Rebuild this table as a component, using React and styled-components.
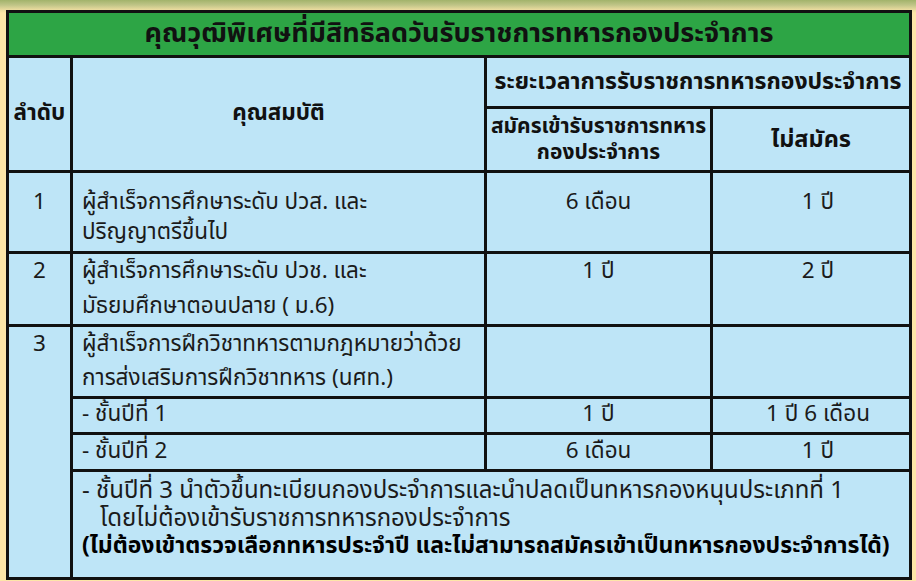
import React from 'react';
import styled, { createGlobalStyle } from 'styled-components';

const GlobalStyle = createGlobalStyle`
    html, body {
        margin: 0;
        padding: 0;
    }
    body {
        width: 916px;
        height: 581px;
        overflow: hidden;
        background: linear-gradient(to bottom, #a2b36b 0px, #bfc487 5px, #ecdc9f 10px, #fde6a8 13px);
        font-family: "Noto Sans Thai", "Noto Sans", "DejaVu Sans", sans-serif;
    }
`;

const Wrapper = styled.div`
    padding: 10px 0 0 6px;
`;

const Table = styled.table`
    width: 903px;
    border-collapse: collapse;
    table-layout: fixed;
    border: 3px solid #111;
    color: #1b1b1b;
`;

const Row = styled.tr`
    height: ${props => props.$h}px;
`;

const TitleCell = styled.th`
    background-color: #2da545;
    border: 3px solid #111;
    font-size: 27px;
    font-weight: bold;
    color: #111;
    text-align: center;
    vertical-align: middle;
    line-height: 36px;
    padding: 0;
`;

const HeadCell = styled.th`
    background-color: #bee5f7;
    border: 3px solid #111;
    font-size: ${props => props.$size || 22.5}px;
    font-weight: bold;
    color: #111;
    text-align: center;
    vertical-align: middle;
    line-height: 26px;
    white-space: nowrap;
    padding: 0 0 ${props => props.$pb || 0}px 0;
`;

const Cell = styled.td`
    background-color: #bee5f7;
    border: 3px solid #111;
    font-size: ${props => props.$size || 22.5}px;
    line-height: ${props => props.$lh || 30}px;
    white-space: nowrap;
    text-align: ${props => props.$align || 'left'};
    vertical-align: ${props => props.$valign || 'top'};
    padding: ${props => props.$pt || 0}px 0 ${props => props.$pb || 0}px ${props => props.$pl || 0}px;
`;

const Indent = styled.span`
    padding-left: 18px;
`;

const Strong = styled.span`
    font-size: 23px;
    font-weight: bold;
    color: #000;
`;

const rows = [
    { no: '1', text: ['ผู้สำเร็จการศึกษาระดับ ปวส. และ', 'ปริญญาตรีขึ้นไป'], apply: '6 เดือน', none: '1 ปี', h: 81, lh: 30, pt: 14 },
    { no: '2', text: ['ผู้สำเร็จการศึกษาระดับ ปวช. และ', 'มัธยมศึกษาตอนปลาย ( ม.6)'], apply: '1 ปี', none: '2 ปี', h: 71, lh: 35, pt: 0 },
];

const App = () => {
    return (
        <Wrapper>
            <GlobalStyle />
            <Table>
                <colgroup>
                    <col style={{ width: 64 }} />
                    <col style={{ width: 414 }} />
                    <col style={{ width: 226 }} />
                    <col style={{ width: 199 }} />
                </colgroup>
                <tbody>
                    <Row $h={45}>
                        <TitleCell colSpan={4}>คุณวุฒิพิเศษที่มีสิทธิลดวันรับราชการทหารกองประจำการ</TitleCell>
                    </Row>
                    <Row $h={51}>
                        <HeadCell rowSpan={2} $pb={2}>ลำดับ</HeadCell>
                        <HeadCell rowSpan={2} $pb={2}>คุณสมบัติ</HeadCell>
                        <HeadCell colSpan={2} $size={23}>ระยะเวลาการรับราชการทหารกองประจำการ</HeadCell>
                    </Row>
                    <Row $h={64}>
                        <HeadCell $size={21}>สมัครเข้ารับราชการทหาร<br />กองประจำการ</HeadCell>
                        <HeadCell $size={23.5}>ไม่สมัคร</HeadCell>
                    </Row>
                    {rows.map(({ no, text, apply, none, h, lh, pt }) => (
                        <Row $h={h} key={`row${no}`}>
                            <Cell $align='center' $lh={lh} $pt={pt}>{no}</Cell>
                            <Cell $lh={lh} $pt={pt} $pl={9}>{text[0]}<br />{text[1]}</Cell>
                            <Cell $align='center' $lh={lh} $pt={pt}>{apply}</Cell>
                            <Cell $align='center' $lh={lh} $pt={pt} $pl={14}>{none}</Cell>
                        </Row>
                    ))}
                    <Row $h={72}>
                        <Cell rowSpan={4} $align='center' $lh={34}>3</Cell>
                        <Cell $lh={34} $pl={9}>ผู้สำเร็จการฝึกวิชาทหารตามกฎหมายว่าด้วย<br />การส่งเสริมการฝึกวิชาทหาร (นศท.)</Cell>
                        <Cell />
                        <Cell />
                    </Row>
                    <Row $h={36}>
                        <Cell $valign='middle' $pl={9} $pb={3}>- ชั้นปีที่ 1</Cell>
                        <Cell $valign='middle' $align='center' $pb={3}>1 ปี</Cell>
                        <Cell $valign='middle' $align='center' $pl={14} $pb={3}>1 ปี 6 เดือน</Cell>
                    </Row>
                    <Row $h={37}>
                        <Cell $valign='middle' $pl={9} $pb={3}>- ชั้นปีที่ 2</Cell>
                        <Cell $valign='middle' $align='center' $pb={3}>6 เดือน</Cell>
                        <Cell $valign='middle' $align='center' $pl={14} $pb={3}>1 ปี</Cell>
                    </Row>
                    <Row $h={108}>
                        <Cell colSpan={3} $size={24} $lh={27.5} $pt={6} $pl={9}>
                            - ชั้นปีที่ 3 นำตัวขึ้นทะเบียนกองประจำการและนำปลดเป็นทหารกองหนุนประเภทที่ 1<br />
                            <Indent>โดยไม่ต้องเข้ารับราชการทหารกองประจำการ</Indent><br />
                            <Strong>(ไม่ต้องเข้าตรวจเลือกทหารประจำปี และไม่สามารถสมัครเข้าเป็นทหารกองประจำการได้)</Strong>
                        </Cell>
                    </Row>
                </tbody>
            </Table>
        </Wrapper>
    );
};

export default App;
